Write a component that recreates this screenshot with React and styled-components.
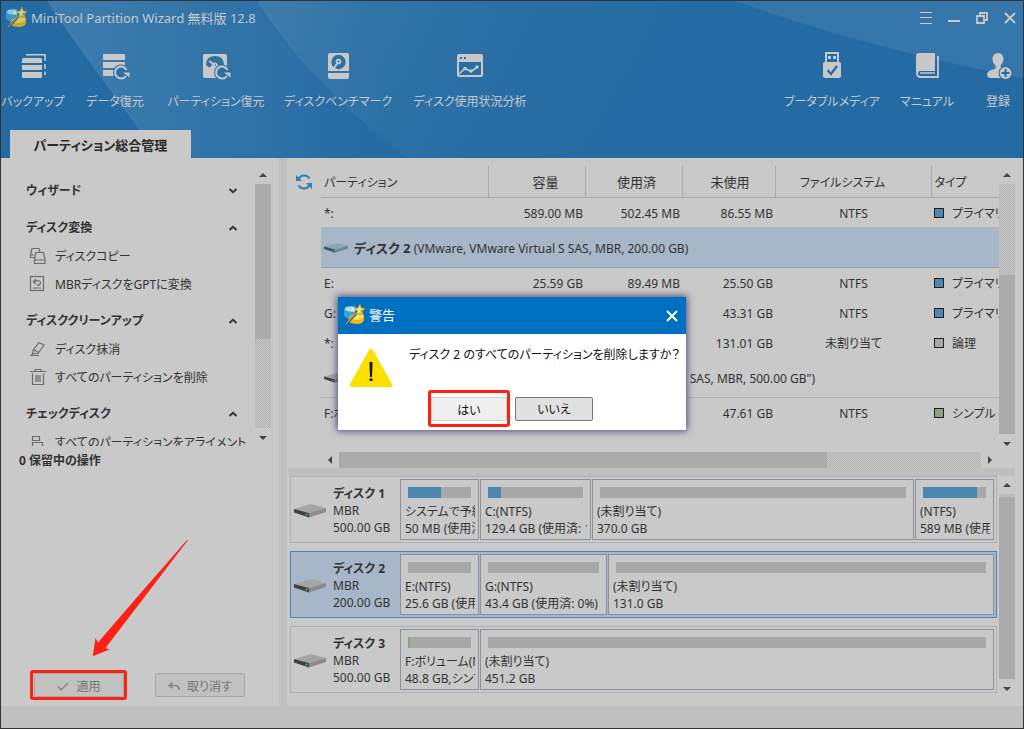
import React from 'react';
import styled, { createGlobalStyle, css } from 'styled-components';

const color = {
  surface: '#c9c9c9',
  rail: '#bfbfbf',
  ink: '#333333',
  line: '#a9a9a9',
  thumb: '#ababab',
  blue: '#246ba3',
  selected: '#a7b7c8',
  used: '#4b87ae',
  free: '#a8a8a8',
  simple: '#86a67c',
  alert: '#ff2014',
};

const GlobalStyle = createGlobalStyle`
  * { box-sizing: border-box; }
  body {
    margin: 0;
    background: ${color.surface};
    color: ${color.ink};
    font-family: "Noto Sans", "Noto Sans CJK JP", sans-serif;
    font-size: 12px;
    line-height: 17px;
    font-feature-settings: "palt";
  }
  button { font: inherit; font-feature-settings: inherit; color: inherit; }
  svg { flex: none; }
`;

const Window = styled.div`
  position: relative;
  display: flex;
  flex-direction: column;
  min-height: 100vh;
  border: 1px solid #333;
  overflow: hidden;
`;

/* ---------- header ---------- */

const Header = styled.header`
  position: relative;
  background: ${color.blue};
  color: #c8c8c8;
`;

const HeaderArt = styled.svg`
  position: absolute;
  inset: 0;
  width: 100%;
  height: 100%;
`;

const TitleBar = styled.div`
  position: relative;
  display: flex;
  align-items: center;
  height: 33px;
  padding: 1px 5px 0 4px;
`;

const AppTitle = styled.h1`
  flex: 1;
  margin: 0 0 0 3px;
  font-size: 13px;
  font-weight: 400;
  white-space: nowrap;
`;

const WindowControls = styled.div`
  display: flex;
  gap: 12px;
`;

const PlainButton = styled.button`
  display: flex;
  align-items: center;
  justify-content: center;
  width: 16px;
  height: 16px;
  padding: 0;
  border: 0;
  background: none;
`;

const Toolbar = styled.nav`
  position: relative;
  display: flex;
  justify-content: space-between;
  padding: 18px 5px 19px 4px;
`;

const ToolGroup = styled.div`
  display: flex;
  gap: 26px;
`;

const ToolButton = styled.button`
  display: flex;
  flex-direction: column;
  align-items: center;
  gap: 13px;
  width: ${(p) => p.$width}px;
  padding: 0;
  border: 0;
  background: none;
  line-height: 18px;
  white-space: nowrap;
`;

const Tab = styled.button`
  position: relative;
  display: block;
  width: 181px;
  height: 28px;
  margin-left: 9px;
  padding: 2px 0 0;
  border: 0;
  background: ${color.surface};
  color: #2b2b2b;
  font-size: 13px;
  font-weight: 700;
`;

/* ---------- scroll bars ---------- */

const ScrollBar = styled.div`
  display: flex;
  flex: none;
  flex-direction: ${(p) => (p.$horizontal ? 'row' : 'column')};
  ${(p) => (p.$horizontal ? 'height' : 'width')}: 16px;
`;

const ScrollArrow = styled.button`
  display: flex;
  align-items: center;
  justify-content: center;
  flex: none;
  width: ${(p) => (p.$horizontal ? 18 : 16)}px;
  height: ${(p) => (p.$horizontal ? 16 : 18)}px;
  padding: 0;
  border: 0;
  background: none;
`;

const ScrollTrack = styled.div`
  display: flex;
  flex: 1;
  flex-direction: ${(p) => (p.$horizontal ? 'row' : 'column')};
  background: repeating-conic-gradient(#b0b0b0 0 25%, #c9c9c9 0 50%) 0 0 / 2px 2px;
`;

const ScrollSpace = styled.div`
  flex: ${(p) => p.$size};
`;

const ScrollThumb = styled.div`
  flex: ${(p) => p.$size};
  background: ${color.thumb};
`;

/* ---------- body ---------- */

const Body = styled.main`
  display: flex;
  flex: 1;
  min-width: 0;
  background: ${color.surface};
`;

const Sidebar = styled.aside`
  display: flex;
  flex: none;
  flex-direction: column;
  width: 278px;
  padding: 8px 8px 6px 0;
`;

const TaskScroller = styled.div`
  display: flex;
  height: 280px;
`;

const TaskList = styled.div`
  display: flex;
  flex: 1;
  flex-direction: column;
  gap: 8px;
  min-width: 0;
  padding: 10px 17px 0 25px;
  overflow: hidden;
`;

const SectionTitle = styled.button`
  display: flex;
  align-items: center;
  justify-content: space-between;
  width: 100%;
  height: 29px;
  padding: 0;
  border: 0;
  background: none;
  font-weight: 700;
`;

const TaskLink = styled.a`
  display: flex;
  align-items: center;
  gap: 8px;
  height: 28px;
  padding-left: 3px;
  color: inherit;
  text-decoration: none;
  white-space: nowrap;
`;

const Pending = styled.h2`
  margin: 0;
  padding-left: 18px;
  font-size: 12px;
  line-height: 30px;
`;

const Actions = styled.div`
  position: relative;
  display: flex;
  align-items: center;
  gap: 28px;
  margin-top: auto;
  padding-left: 29px;
`;

const Highlight = styled.div`
  display: flex;
  padding: ${(p) => (p.$tall ? '4px 0 3px' : '0 0 0 1px')};
  border: 3px solid ${color.alert};
  border-radius: 3px;
`;

const ActionButton = styled.button`
  display: flex;
  align-items: center;
  justify-content: center;
  gap: 7px;
  width: 90px;
  height: 24px;
  padding: 2px 0 0;
  border: 1px solid #a6a6a6;
  border-radius: 2px;
  background: #c1c1c1;
  color: #757575;
`;

const PointerArrow = styled.svg`
  position: absolute;
  left: 90px;
  bottom: 42px;
`;

const Splitter = styled.div`
  flex: none;
  background: ${color.rail};
  ${(p) =>
    p.$horizontal
      ? css`
          height: 8px;
          margin: 0 8px 0 1px;
        `
      : css`
          width: 8px;
        `}
`;

const Content = styled.section`
  display: flex;
  flex: 1;
  flex-direction: column;
  min-width: 0;
`;

const ListPane = styled.div`
  display: flex;
  padding: 8px 8px 0 0;
`;

const RefreshCell = styled.div`
  display: flex;
  flex: none;
  justify-content: center;
  width: 34px;
  height: 31px;
`;

const RefreshButton = styled(PlainButton)`
  width: 18px;
  height: 31px;
`;

const ListColumn = styled.div`
  flex: 1;
  min-width: 0;
`;

const ListViewport = styled.div`
  height: 286px;
  overflow: hidden;
`;

const ListScroll = styled.div`
  display: flex;
  height: 286px;
`;

const PartitionTable = styled.table`
  width: 100%;
  table-layout: fixed;
  border-collapse: collapse;
`;

const Column = styled.col`
  width: ${(p) => (p.$width ? `${p.$width}px` : 'auto')};
`;

const HeadCell = styled.th`
  height: 31px;
  padding: 2px ${(p) => p.$right || 0}px 0 ${(p) => p.$left || 3}px;
  border-right: 1px solid ${color.line};
  border-bottom: 1px solid ${color.line};
  font-size: ${(p) => p.$size || 13}px;
  font-weight: 400;
  text-align: ${(p) => p.$align || 'center'};
  &:last-child { border-right: 0; }
`;

const Cell = styled.td`
  height: 30px;
  padding: 2px 2px 0 3px;
  text-align: ${(p) => p.$align || 'left'};
  white-space: nowrap;
  overflow: hidden;
`;

const DiskCell = styled.td`
  height: 40px;
  padding: 3px 3px 0;
  border-bottom: 1px solid ${(p) => (p.$selected ? '#91a2b5' : '#b4b4b4')};
  background: ${(p) => (p.$selected ? color.selected : 'none')};
  white-space: nowrap;
`;

const DiskLabel = styled.div`
  display: flex;
  align-items: center;
  gap: 6px;
`;

const DiskName = styled.strong`
  font-size: 13px;
`;

const KindLabel = styled.span`
  display: flex;
  align-items: center;
  gap: 8px;
`;

const Swatch = styled.span`
  flex: none;
  width: 10px;
  height: 10px;
  border: 1px solid #1f1f1f;
  background: ${(p) => p.$fill};
`;

/* ---------- disk map ---------- */

const MapPane = styled.div`
  display: flex;
  flex: 1;
  gap: 2px;
  padding: 0 8px 9px 3px;
`;

const MapRows = styled.div`
  display: flex;
  flex: 1;
  flex-direction: column;
  gap: 8px;
  min-width: 0;
`;

const MapRow = styled.div`
  display: grid;
  grid-template-columns: 108px ${(p) => p.$columns};
  gap: 1px;
  padding: 2px 2px 2px 0;
  border: 1px solid ${(p) => (p.$selected ? '#4a87b5' : '#aeb0b6')};
  background: ${(p) => (p.$selected ? color.selected : color.surface)};
`;

const MapDisk = styled.div`
  display: flex;
  align-items: center;
  gap: 7px;
  padding: 2px 0 0 3px;
  white-space: nowrap;
`;

const MapLines = styled.div`
  display: flex;
  flex-direction: column;
`;

const Block = styled.div`
  min-width: 0;
  height: 61px;
  padding: 7px 3px 0 4px;
  border: 1px solid #8b929e;
  background: ${color.surface};
`;

const Meter = styled.div`
  height: 11px;
  margin: 0 4px 5px 3px;
  background: ${color.free};
`;

const MeterFill = styled.div`
  height: 100%;
  background: ${(p) => p.$fill};
`;

const BlockText = styled.div`
  overflow: hidden;
  white-space: nowrap;
`;

const StatusBar = styled.footer`
  height: 22px;
  background: ${color.rail};
`;

/* ---------- dialog ---------- */

const Overlay = styled.div`
  position: absolute;
  inset: 0;
  display: flex;
  align-items: center;
  justify-content: center;
  padding-bottom: 2px;
`;

const Dialog = styled.div`
  width: 348px;
  background: #fff;
  color: #111;
  box-shadow: 0 0 7px 1px rgba(55, 48, 105, 0.85);
`;

const DialogTitle = styled.div`
  display: flex;
  align-items: center;
  gap: 3px;
  height: 37px;
  padding: 0 6px 0 5px;
  background: #0070c0;
  color: #fff;
`;

const DialogHeading = styled.h2`
  flex: 1;
  margin: 0;
  font-size: 13px;
  font-weight: 400;
`;

const DialogBody = styled.div`
  display: flex;
  gap: 16px;
  padding: 12px 0 1px 11px;
`;

const DialogText = styled.p`
  margin: 0;
  white-space: nowrap;
`;

const DialogButtons = styled.div`
  display: flex;
  align-items: center;
  gap: 5px;
  padding: 0 0 3px 90px;
`;

const DialogButton = styled.button`
  width: ${(p) => (p.$primary ? 76 : 78)}px;
  height: 24px;
  padding: 2px 0 0;
  border: 1px solid ${(p) => (p.$primary ? '#cfcfcf' : '#777')};
  border-radius: 2px;
  background: ${(p) => (p.$primary ? '#efefef' : '#e1e1e1')};
`;

/* ---------- drawings ---------- */

const AppIcon = ({ dim }) => (
  <svg width="23" height="23" viewBox="0 0 23 23" opacity={dim ? 0.8 : 1} aria-hidden="true">
    <path d="M1 6Q1 3 6 2q6-1 7 1v9l-5 4Q1 13 1 11z" fill="#3aa3d8" />
    <ellipse cx="7" cy="5" rx="5" ry="2.4" fill="#a9e0f3" />
    <path d="M7 12l9-4 5 3v5q-1 4-7 4t-9-3z" fill="#f0b912" />
    <path d="M9 13q6-4 12-1-2 4-8 4-4 0-4-3z" fill="#ffe25a" />
    <path d="M2 21.500L15 8" stroke="#4a4a52" strokeWidth="2" />
    <path d="M2.500 20.500L14 8.500" stroke="#e8e8e8" strokeWidth=".7" />
    <path d="M17 0l1.200 4 4 .5-3.200 2.500 1.500 4-3.500-2.300L13.500 11l1-4L11 4.500l4-.5z" fill="#ffe98a" stroke="#c98d12" strokeWidth=".7" />
    <path d="M10 3l.8 1.800 2 .2-1.500 1.300.5 2L10 7.200 8.200 8.300l.5-2L7.200 5l2-.2z" fill="#fff0a8" />
    <circle cx="19" cy="7" r="1.500" fill="#74b843" />
  </svg>
);

const ToolSvg = ({ children }) => (
  <svg width="30" height="28" viewBox="0 0 30 28" fill="#c8c8c8" aria-hidden="true">
    {children}
  </svg>
);

const BackupIcon = () => (
  <ToolSvg>
    <path d="M4 7.500Q4 6 5.500 6h17Q24 6 24 7.500V11H4zM4 13h20v5H4zM4 20h20v4.500q0 1.500-1.500 1.500h-17Q4 26 4 24.500z" />
    <path d="M8 2.800h19V9M27 12v5M27 19.500V23" fill="none" stroke="#c8c8c8" strokeWidth="1.500" />
  </ToolSvg>
);

const RestoreArc = () => (
  <g>
    <circle cx="21" cy="20.500" r="8" fill="#2e70a4" />
    <path d="M26.500 18a6 6 0 1 0-.5 6" fill="none" stroke="#c8c8c8" strokeWidth="2" />
    <path d="M23 20.500h6.500V25.500z" />
  </g>
);

const DataIcon = () => (
  <ToolSvg>
    <path d="M3 3q0-1 1-1h20q1 0 1 1v5H3zM3 10h22v6H3zM3 18h12v6H4q-1 0-1-1z" />
    <RestoreArc />
  </ToolSvg>
);

const PartitionIcon = () => (
  <ToolSvg>
    <rect x="2" y="2" width="24" height="24" rx="2" />
    <path d="M5 13Q5 4 14 4t9 9l-4 2q-1-3-5-3t-5 4z" fill="#2e70a4" />
    <circle cx="14" cy="13" r="2.500" />
    <circle cx="14" cy="13" r="1" fill="#2e70a4" />
    <path d="M8 9l6 4" stroke="#c8c8c8" strokeWidth="2" />
    <RestoreArc />
  </ToolSvg>
);

const BenchmarkIcon = () => (
  <ToolSvg>
    <path d="M5 3q0-2 2-2h17q2 0 2 2v16H5zM5 21h21v4q0 2-2 2H7q-2 0-2-2z" />
    <circle cx="15.500" cy="10" r="7.200" fill="#2e70a4" />
    <circle cx="15.500" cy="9.500" r="2.800" />
    <path d="M14.500 11l-5 7" stroke="#c8c8c8" strokeWidth="2" />
    <circle cx="15.500" cy="9.500" r="1" fill="#2e70a4" />
  </ToolSvg>
);

const UsageIcon = () => (
  <ToolSvg>
    <rect x="2" y="2" width="26" height="23" rx="2" />
    <path d="M4 10h22v13H4zM5 5h2v2H5zM9 5h2v2H9z" fill="#2870a4" />
    <path d="M4 22l6-5.500 6 3 6.500-4.500" fill="none" stroke="#c8c8c8" strokeWidth="1.600" />
    <circle cx="10" cy="16.500" r="1.800" />
    <circle cx="16" cy="19" r="1.800" />
    <circle cx="22" cy="15" r="1.800" />
  </ToolSvg>
);

const UsbIcon = () => (
  <ToolSvg>
    <path d="M8 0h14v12H8z" />
    <path d="M10 2h10v8H10z" fill={color.blue} />
    <path d="M11 4h3v3h-3zM16 4h3v3h-3z" />
    <rect x="6" y="10" width="18" height="16" rx="2" />
    <path d="M10.500 18l3.500 4 6-8" fill="none" stroke={color.blue} strokeWidth="2.200" />
  </ToolSvg>
);

const ManualIcon = () => (
  <ToolSvg>
    <path d="M4 4q0-3 3-3h16v16H8q-4 1-4 5z" />
    <path d="M23 18H8q-3 .5-3 3.500T8 25h18V4" fill="none" stroke="#c8c8c8" strokeWidth="1.800" />
    <path d="M8 21h15" stroke="#c8c8c8" strokeWidth="1.500" />
  </ToolSvg>
);

const RegisterIcon = () => (
  <ToolSvg>
    <path d="M9.500 7.500Q9.500 1 15 1t5.500 6.500Q20 11 17.500 13.500q0 3 2 4.500V26H7q-3-1-3-4 1-4 8-5 1-1.500.5-3.500-3-3-3-6z" />
    <circle cx="22.500" cy="21" r="7" fill={color.blue} />
    <circle cx="22.500" cy="21" r="6" />
    <path d="M22.500 17v8M18.500 21h8" stroke={color.blue} strokeWidth="2" />
  </ToolSvg>
);

const MenuIcon = () => (
  <svg width="12" height="12" viewBox="0 0 12 12" stroke="#c8c8c8" aria-hidden="true">
    <path d="M0 .5h12M0 5.500h12M0 11.500h12" />
  </svg>
);
const MinimizeIcon = () => (
  <svg width="12" height="12" viewBox="0 0 12 12" aria-hidden="true">
    <path d="M0 8h12v2H0z" fill="#c8c8c8" />
  </svg>
);
const RestoreIcon = () => (
  <svg width="12" height="12" viewBox="0 0 12 12" fill="none" stroke="#c8c8c8" strokeWidth="1.800" aria-hidden="true">
    <path d="M1 4h7v7H1zM4 4V1h7v7H8" />
  </svg>
);
const CloseIcon = ({ tone = '#c8c8c8' }) => (
  <svg width="12" height="12" viewBox="0 0 12 12" stroke={tone} strokeWidth="2" aria-hidden="true">
    <path d="M1 1l10 10M11 1L1 11" />
  </svg>
);

const RefreshIcon = () => (
  <svg width="16" height="16" viewBox="0 0 16 16" fill="none" stroke="#3b7fb0" strokeWidth="2.200" aria-hidden="true">
    <path d="M2.500 5A6.300 6.300 0 0 1 13.500 4.500M13.500 11A6.300 6.300 0 0 1 2.500 11.500" />
    <path d="M0 1v6h6zM16 15V9h-6z" fill="#3b7fb0" stroke="none" />
  </svg>
);

const Chevron = ({ open }) => (
  <svg width="10" height="6" viewBox="0 0 10 6" fill="none" stroke="#333" strokeWidth="2" aria-hidden="true">
    <path d={open ? 'M1.500 5L5 1.800 8.500 5' : 'M1.500 1L5 4.200 8.500 1'} />
  </svg>
);

const TaskSvg = ({ children }) => (
  <svg width="18" height="18" viewBox="0 0 18 18" fill="none" stroke="#6c6c6c" strokeWidth="1.200" aria-hidden="true">
    {children}
  </svg>
);
const CopyIcon = () => (
  <TaskSvg>
    <path d="M6 10.500H1.500V8L3 1.500h7l1 4M1.500 8H5M1.500 10.500V8" />
    <path d="M7 5.500h7.500l1.500 7v4H5.500v-4zM5.500 13H16" />
  </TaskSvg>
);
const ConvertIcon = () => (
  <TaskSvg>
    <rect x="1.500" y="1.500" width="13" height="14" />
    <path d="M4 13h8M7 4L4.500 6.500 7 9M5 6.500q6-2 6.500 1 0 2.500-3.500 3" />
  </TaskSvg>
);
const EraseIcon = () => (
  <TaskSvg>
    <path d="M4.500 9.500L10 2.500l5 2.500-6 8.500H4L2 15.500h8M4.500 9.500L3.500 14M4.500 9.500l5 3" />
  </TaskSvg>
);
const TrashIcon = () => (
  <TaskSvg>
    <path d="M1 3.500h16M6 3.500v-2h6v2M3.500 5.500v11h11v-11M7 7v7M9 7v7M11 7v7" />
  </TaskSvg>
);
const AlignIcon = () => (
  <TaskSvg>
    <path d="M3.500 3.500h7v4h-7zM3.500 9.500h10v4h-10zM3.500 15.500h12" />
  </TaskSvg>
);

const DriveIcon = ({ wide, tint }) => (
  <svg width={wide ? 32 : 24} height={wide ? 14 : 10} viewBox="0 0 32 14" preserveAspectRatio="none" aria-hidden="true">
    <path d="M0 5L17 0l15 4-17 5z" fill={tint ? '#8ea5b7' : '#a5a5a5'} />
    <path d="M0 5l15 4v4.500L0 8.500z" fill={tint ? '#3b5568' : '#404040'} />
    <path d="M15 9l17-5v4l-17 5.500z" fill={tint ? '#6f8799' : '#8b8b8b'} />
    <circle cx="12.500" cy="10.500" r="1.200" fill="#3f9a4c" />
  </svg>
);

const WarningIcon = () => (
  <svg width="44" height="43" viewBox="0 0 44 43" aria-hidden="true">
    <path d="M20 4q2-3 4 0l19 34q1 3-2 3H3q-3 0-2-3z" fill="#fce100" />
    <path d="M20.500 16h3l-.5 15h-2zM20.500 32.500h3v2.500h-3z" fill="#111" />
  </svg>
);

const Triangle = ({ dir }) => {
  const shape = {
    up: 'M0 6l4-4 4 4z',
    down: 'M0 3h8L4 7z',
    left: 'M6 0v8L2 4z',
    right: 'M2 0v8l4-4z',
  };
  return (
    <svg width="8" height="8" viewBox="0 0 8 8" fill="#444" aria-hidden="true">
      <path d={shape[dir]} />
    </svg>
  );
};

/* ---------- parts ---------- */

const Scroll = ({ horizontal, before, thumb, after }) => (
  <ScrollBar $horizontal={horizontal}>
    <ScrollArrow $horizontal={horizontal} aria-label={horizontal ? '左へ' : '上へ'}>
      <Triangle dir={horizontal ? 'left' : 'up'} />
    </ScrollArrow>
    <ScrollTrack $horizontal={horizontal}>
      <ScrollSpace $size={before} />
      <ScrollThumb $size={thumb} />
      <ScrollSpace $size={after} />
    </ScrollTrack>
    <ScrollArrow $horizontal={horizontal} aria-label={horizontal ? '右へ' : '下へ'}>
      <Triangle dir={horizontal ? 'right' : 'down'} />
    </ScrollArrow>
  </ScrollBar>
);

const leftTools = [
  ['バックアップ', 56, BackupIcon],
  ['データ復元', 56, DataIcon],
  ['パーティション復元', 94, PartitionIcon],
  ['ディスクベンチマーク', 98, BenchmarkIcon],
  ['ディスク使用状況分析', 114, UsageIcon],
];
const rightTools = [
  ['ブータブルメディア', 88, UsbIcon],
  ['マニュアル', 50, ManualIcon],
  ['登録', 40, RegisterIcon],
];

const sections = [
  { title: 'ウィザード', open: false, tasks: [] },
  { title: 'ディスク変換', open: true, tasks: [['ディスクコピー', CopyIcon], ['MBRディスクをGPTに変換', ConvertIcon]] },
  { title: 'ディスククリーンアップ', open: true, tasks: [['ディスク抹消', EraseIcon], ['すべてのパーティションを削除', TrashIcon]] },
  { title: 'チェックディスク', open: true, tasks: [['すべてのパーティションをアライメント', AlignIcon]] },
];

const rows = [
  { cells: ['*:', '589.00 MB', '502.45 MB', '86.55 MB', 'NTFS'], kind: 'プライマリ', fill: color.used },
  { disk: 'ディスク 2', info: '(VMware, VMware Virtual S SAS, MBR, 200.00 GB)', selected: true },
  { cells: ['E:', '25.59 GB', '89.49 MB', '25.50 GB', 'NTFS'], kind: 'プライマリ', fill: color.used },
  { cells: ['G:', '43.40 GB', '92.11 MB', '43.31 GB', 'NTFS'], kind: 'プライマリ', fill: color.used },
  { cells: ['*:', '131.01 GB', '0 B', '131.01 GB', '未割り当て'], kind: '論理', fill: color.free },
  { disk: 'ディスク 3', info: '("ダイナミックディスク" "VMware, VMware Virtual S SAS, MBR, 500.00 GB")' },
  { cells: ['F:ボリューム', '48.83 GB', '1.22 GB', '47.61 GB', 'NTFS'], kind: 'シンプル', fill: color.simple },
];

const disks = [
  {
    name: 'ディスク 1', size: '500.00 GB', columns: '79px 111px 1fr 79px',
    blocks: [
      ['システムで予約済み', '50 MB (使用済: 52%)', 52, color.used],
      ['C:(NTFS)', '129.4 GB (使用済: 14%)', 14, color.used],
      ['(未割り当て)', '370.0 GB', 0, color.used],
      ['(NTFS)', '589 MB (使用済: 85%)', 86, color.used],
    ],
  },
  {
    name: 'ディスク 2', size: '200.00 GB', columns: '79px 127px 1fr', selected: true,
    blocks: [
      ['E:(NTFS)', '25.6 GB (使用済: 0%)', 0, color.used],
      ['G:(NTFS)', '43.4 GB (使用済: 0%)', 0, color.used],
      ['(未割り当て)', '131.0 GB', 0, color.used],
    ],
  },
  {
    name: 'ディスク 3', size: '500.00 GB', columns: '79px 1fr',
    blocks: [
      ['F:ボリューム(NTFS)', '48.8 GB,シンプル', 3, color.simple],
      ['(未割り当て)', '451.2 GB', 0, color.used],
    ],
  },
];

const Tools = ({ items }) => (
  <ToolGroup>
    {items.map(([label, width, Icon]) => (
      <ToolButton key={label} $width={width}>
        <Icon />
        <span>{label}</span>
      </ToolButton>
    ))}
  </ToolGroup>
);

const PartitionList = () => (
  <PartitionTable>
    <colgroup>
      <Column $width={167} />
      <Column $width={97} />
      <Column $width={97} />
      <Column $width={93} />
      <Column $width={156} />
      <Column />
    </colgroup>
    <thead>
      <tr>
        <HeadCell $align="left" $size={12}>パーティション</HeadCell>
        <HeadCell $left={18}>容量</HeadCell>
        <HeadCell $left={6}>使用済</HeadCell>
        <HeadCell>未使用</HeadCell>
        <HeadCell $size={12} $right={24}>ファイルシステム</HeadCell>
        <HeadCell $align="left" $size={12}>タイプ</HeadCell>
      </tr>
    </thead>
    <tbody>
      {rows.map((row, i) =>
        row.disk ? (
          <tr key={i}>
            <DiskCell colSpan={6} $selected={row.selected}>
              <DiskLabel>
                <DriveIcon tint={row.selected} />
                <span>
                  <DiskName>{row.disk}</DiskName> {row.info}
                </span>
              </DiskLabel>
            </DiskCell>
          </tr>
        ) : (
          <tr key={i}>
            {row.cells.map((text, j) => (
              <Cell key={j} $align={j === 0 ? 'left' : j === 4 ? 'center' : 'right'}>{text}</Cell>
            ))}
            <Cell>
              <KindLabel>
                <Swatch $fill={row.fill} />
                {row.kind}
              </KindLabel>
            </Cell>
          </tr>
        )
      )}
    </tbody>
  </PartitionTable>
);

const DiskMap = () => (
  <MapRows>
    {disks.map((disk) => (
      <MapRow key={disk.name} $columns={disk.columns} $selected={disk.selected}>
        <MapDisk>
          <DriveIcon wide />
          <MapLines>
            <strong>{disk.name}</strong>
            <span>MBR</span>
            <span>{disk.size}</span>
          </MapLines>
        </MapDisk>
        {disk.blocks.map(([name, detail, used, fill]) => (
          <Block key={name}>
            <Meter>
              <MeterFill $fill={fill} style={{ width: `${used}%` }} />
            </Meter>
            <BlockText>{name}</BlockText>
            <BlockText>{detail}</BlockText>
          </Block>
        ))}
      </MapRow>
    ))}
  </MapRows>
);

export default function App() {
  return (
    <>
      <GlobalStyle />
      <Window>
        <Header>
          <HeaderArt viewBox="0 0 1022 157" preserveAspectRatio="none" aria-hidden="true">
            <defs>
              <linearGradient id="beamA" x1="0" y1="0" x2="1" y2="0">
                <stop offset="0" stopColor="#c0d4e0" stopOpacity=".17" />
                <stop offset="1" stopColor="#c0d4e0" stopOpacity="0" />
              </linearGradient>
              <linearGradient id="beamB" x1="0" y1="0" x2="1" y2="0.200">
                <stop offset="0" stopColor="#a8c4d4" stopOpacity=".14" />
                <stop offset="1" stopColor="#60a0b8" stopOpacity="0" />
              </linearGradient>
            </defs>
            <path d="M46 0Q90 66 160 157H380V0z" fill="url(#beamA)" />
            <path d="M256 0Q305 78 405 157H700V0z" fill="url(#beamB)" />
            <path d="M735 0Q860 46 1022 77V0z" fill="#c0d4e0" opacity=".1" />
          </HeaderArt>
          <TitleBar>
            <AppIcon dim />
            <AppTitle>MiniTool Partition Wizard 無料版 12.8</AppTitle>
            <WindowControls>
              <PlainButton aria-label="メニュー"><MenuIcon /></PlainButton>
              <PlainButton aria-label="最小化"><MinimizeIcon /></PlainButton>
              <PlainButton aria-label="元に戻す"><RestoreIcon /></PlainButton>
              <PlainButton aria-label="閉じる"><CloseIcon /></PlainButton>
            </WindowControls>
          </TitleBar>
          <Toolbar>
            <Tools items={leftTools} />
            <Tools items={rightTools} />
          </Toolbar>
          <Tab>パーティション総合管理</Tab>
        </Header>

        <Body>
          <Sidebar>
            <TaskScroller>
              <TaskList>
                {sections.map((section) => (
                  <div key={section.title}>
                    <SectionTitle aria-expanded={section.open}>
                      {section.title}
                      <Chevron open={section.open} />
                    </SectionTitle>
                    {section.tasks.map(([label, Icon]) => (
                      <TaskLink key={label} href="#">
                        <Icon />
                        {label}
                      </TaskLink>
                    ))}
                  </div>
                ))}
              </TaskList>
              <Scroll before={0} thumb={154} after={89} />
            </TaskScroller>
            <Pending>0 保留中の操作</Pending>
            <Actions>
              <PointerArrow width="100" height="120" viewBox="0 0 100 120" aria-hidden="true">
                <path d="M1.700 118.300L4.500 100l2.500 4.500Q52 52 96 2q1-1 .5.800L14.500 110l4 1.500z" fill={color.alert} />
              </PointerArrow>
              <Highlight>
                <ActionButton>
                  <svg width="12" height="9" viewBox="0 0 12 9" fill="none" stroke="#888" strokeWidth="1.600" aria-hidden="true">
                    <path d="M1 4.500L4 8l7-7" />
                  </svg>
                  適用
                </ActionButton>
              </Highlight>
              <ActionButton>
                <svg width="12" height="9" viewBox="0 0 12 9" fill="none" stroke="#888" strokeWidth="1.600" aria-hidden="true">
                  <path d="M4.500 1L1 3.500 4.500 6M1 3.500h6Q11 3.500 11 8" />
                </svg>
                取り消す
              </ActionButton>
            </Actions>
          </Sidebar>
          <Splitter />
          <Content>
            <ListPane>
              <RefreshCell>
                <RefreshButton aria-label="更新"><RefreshIcon /></RefreshButton>
              </RefreshCell>
              <ListColumn>
                <ListViewport>
                  <PartitionList />
                </ListViewport>
                <Scroll horizontal before={0} thumb={488} after={154} />
              </ListColumn>
              <ListScroll>
                <Scroll before={91} thumb={158} after={0} />
              </ListScroll>
            </ListPane>
            <Splitter $horizontal />
            <MapPane>
              <DiskMap />
              <Scroll before={3} thumb={181} after={0} />
            </MapPane>
          </Content>
        </Body>
        <StatusBar />

        <Overlay>
          <Dialog role="dialog" aria-labelledby="warning-title">
            <DialogTitle>
              <AppIcon />
              <DialogHeading id="warning-title">警告</DialogHeading>
              <PlainButton aria-label="閉じる"><CloseIcon tone="#fff" /></PlainButton>
            </DialogTitle>
            <DialogBody>
              <WarningIcon />
              <DialogText>ディスク 2 のすべてのパーティションを削除しますか？</DialogText>
            </DialogBody>
            <DialogButtons>
              <Highlight $tall>
                <DialogButton $primary>はい</DialogButton>
              </Highlight>
              <DialogButton>いいえ</DialogButton>
            </DialogButtons>
          </Dialog>
        </Overlay>
      </Window>
    </>
  );
}
